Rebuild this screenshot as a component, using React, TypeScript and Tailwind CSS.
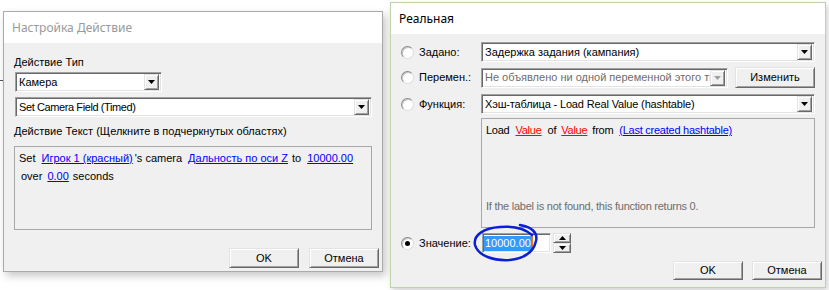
import React from "react";

const sunken =
  "bg-white border border-t-[#a0a0a0] border-l-[#a0a0a0] border-r-white border-b-white shadow-[inset_1px_1px_0_#696969,inset_-1px_-1px_0_#e3e3e3]";
const raised =
  "bg-[#f0f0f0] border border-t-[#e3e3e3] border-l-[#e3e3e3] border-r-[#696969] border-b-[#696969] shadow-[inset_1px_1px_0_#ffffff,inset_-1px_-1px_0_#a0a0a0]";

function Arrow({ color = "#000", up = false }: { color?: string; up?: boolean }) {
  return (
    <svg width="7" height="4" viewBox="0 0 7 4">
      <polygon points={up ? "0,4 7,4 3.5,0" : "0,0 7,0 3.5,4"} fill={color} />
    </svg>
  );
}

function Combo({
  text,
  className,
  textClass = "",
  disabled = false,
}: {
  text: string;
  className: string;
  textClass?: string;
  disabled?: boolean;
}) {
  return (
    <div className={`flex items-center h-[20px] pl-[3px] pr-[2px] ${sunken} ${className}`}>
      <span
        className={`flex-1 overflow-hidden whitespace-nowrap ${
          disabled ? "text-[#6d6d6d]" : "text-black"
        } ${textClass}`}
      >
        {text}
      </span>
      <div className={`flex items-center justify-center w-[15px] h-[16px] shrink-0 ${raised}`}>
        <Arrow color={disabled ? "#a0a0a0" : "#000"} />
      </div>
    </div>
  );
}

function Btn({ label, className }: { label: string; className: string }) {
  return (
    <div className={`flex items-center justify-center text-black ${raised} ${className}`}>
      {label}
    </div>
  );
}

function Radio({ checked = false }: { checked?: boolean }) {
  return (
    <div className="flex items-center justify-center w-[13px] h-[13px] rounded-full bg-white border border-t-[#8a8a8a] border-l-[#8a8a8a] border-r-[#dcdcdc] border-b-[#dcdcdc] shadow-[inset_1px_1px_0_#c8c8c8] shrink-0">
      {checked && <div className="w-[5px] h-[5px] rounded-full bg-black" />}
    </div>
  );
}

function Link({ children, red = false, className = "" }: { children: React.ReactNode; red?: boolean; className?: string }) {
  return (
    <span className={`underline ${red ? "text-[#ff0000]" : "text-[#0000ff]"} ${className}`}>
      {children}
    </span>
  );
}

function ActionDialog() {
  return (
    <div className="flex flex-col w-[380px] h-[261px] mt-[11px] border border-[#aaaaaa] bg-[#f0f0f0] shadow-[3px_4px_8px_rgba(0,0,0,0.22)] shrink-0">
      {/* заголовок */}
      <div className="flex items-center h-[31px] bg-white pl-[8px] font-['Noto_Sans',sans-serif] text-[12px] text-[#9a9a9a]">
        Настройка Действие
      </div>

      <div className="flex flex-col flex-1">
        <div className="h-[14px] leading-[14px] mt-[12px] ml-[10px]">Действие Тип</div>
        <Combo text="Камера" className="w-[147px] mt-[3px] ml-[11px]" />
        <Combo
          text="Set Camera Field (Timed)"
          textClass="tracking-[-0.4px]"
          className="w-[357px] mt-[5px] ml-[11px]"
        />
        <div className="h-[14px] leading-[14px] mt-[7px] ml-[10px]">
          Действие Текст (Щелкните в подчеркнутых областях)
        </div>

        <div className="flex flex-col w-[358px] h-[84px] mt-[8px] ml-[10px] border border-[#a8a8a8] pl-[4px] pt-[2px] leading-[18px]">
          <div className="flex whitespace-nowrap">
            <span>Set</span>
            <Link className="ml-[6px]">Игрок 1 (красный)</Link>
            <span className="ml-[2px]">'s camera</span>
            <Link className="ml-[6px]">Дальность по оси Z</Link>
            <span className="ml-[4px]">to</span>
            <Link className="ml-[6px]">10000.00</Link>
          </div>
          <div className="flex whitespace-nowrap pl-[2px]">
            <span>over</span>
            <Link className="ml-[5px]">0.00</Link>
            <span className="ml-[4px]">seconds</span>
          </div>
        </div>

        <div className="flex justify-end gap-[10px] mt-[18px] pr-[3px]">
          <Btn label="OK" className="w-[70px] h-[20px]" />
          <Btn label="Отмена" className="w-[70px] h-[20px]" />
        </div>
      </div>
    </div>
  );
}

function RealDialog() {
  return (
    <div className="relative flex flex-col w-[436px] h-[286px] mt-[2px] ml-[7px] border border-[#bcd3a5] bg-[#f0f0f0] shadow-[2px_3px_6px_rgba(0,0,0,0.18)] shrink-0">
      <div className="flex items-center h-[31px] bg-white pl-[8px] font-['Noto_Sans',sans-serif] text-[12px] text-black">
        Реальная
      </div>

      <div className="flex flex-col flex-1">
        {/* Задано */}
        <div className="flex items-center h-[20px] mt-[8px]">
          <div className="flex items-center gap-[5px] w-[90px] pl-[10px]">
            <Radio />
            <span>Задано:</span>
          </div>
          <Combo text="Задержка задания (кампания)" className="w-[334px]" />
        </div>

        {/* Перемен. */}
        <div className="flex items-center h-[21px] mt-[5px]">
          <div className="flex items-center gap-[5px] w-[90px] pl-[10px]">
            <Radio />
            <span>Перемен.:</span>
          </div>
          <Combo
            text="Не объявлено ни одной переменной этого типа"
            disabled
            className="w-[247px]"
          />
          <Btn label="Изменить" className="w-[80px] h-[21px] ml-[7px]" />
        </div>

        {/* Функция */}
        <div className="flex items-center h-[20px] mt-[6px]">
          <div className="flex items-center gap-[5px] w-[90px] pl-[10px]">
            <Radio />
            <span>Функция:</span>
          </div>
          <Combo
            text="Хэш-таблица - Load Real Value (hashtable)"
            textClass="tracking-[-0.15px]"
            className="w-[334px]"
          />
        </div>

        <div className="flex flex-col justify-between w-[334px] h-[110px] mt-[4px] ml-[90px] border border-[#a8a8a8] pl-[4px] pt-[4px] pb-[14px] leading-[14px] tracking-[-0.25px]">
          <div className="flex whitespace-nowrap">
            <span>Load</span>
            <Link red className="ml-[6px]">Value</Link>
            <span className="ml-[6px]">of</span>
            <Link red className="ml-[5px]">Value</Link>
            <span className="ml-[5px]">from</span>
            <Link className="ml-[6px]">(Last created hashtable)</Link>
          </div>
          <div className="text-[#6d6d6d] whitespace-nowrap">
            If the label is not found, this function returns 0.
          </div>
        </div>

        {/* Значение */}
        <div className="flex items-center h-[20px] mt-[5px]">
          <div className="flex items-center gap-[5px] w-[91px] pl-[10px]">
            <Radio checked />
            <span>Значение:</span>
          </div>
          <div className={`flex items-center w-[69px] h-[20px] pl-[1px] ${sunken}`}>
            <span className="bg-[#3399ff] text-white leading-[15px] px-[1px]">10000.00</span>
            <span className="w-[1px] h-[14px] bg-[#e07b1a]" />
          </div>
          <div className="flex flex-col w-[18px] h-[20px] ml-[2px]">
            <div className={`flex items-center justify-center flex-1 ${raised}`}>
              <Arrow up />
            </div>
            <div className={`flex items-center justify-center flex-1 ${raised}`}>
              <Arrow />
            </div>
          </div>
        </div>

        <div className="flex justify-end gap-[9px] mt-[8px] pr-[3px]">
          <Btn label="OK" className="w-[70px] h-[19px]" />
          <Btn label="Отмена" className="w-[70px] h-[19px]" />
        </div>
      </div>

      {/* обводка от руки */}
      <svg
        className="absolute left-[79px] top-[219px] pointer-events-none"
        width="72"
        height="42"
        viewBox="0 0 72 42"
      >
        <path
          d="M 50 3 C 62 5, 68 11, 66 19 C 64 29, 56 36, 40 38 C 24 39, 8 34, 5 23 C 3 13, 14 6, 30 5 C 42 4, 54 6, 62 13"
          fill="none"
          stroke="#0b1fd4"
          strokeWidth="2.5"
          strokeLinecap="round"
        />
      </svg>
    </div>
  );
}

export default function App() {
  return (
    <div className="flex w-[829px] h-[290px] bg-white overflow-hidden font-['Liberation_Sans',Arial,sans-serif] text-[11px] text-black">
      <div className="w-[3px] shrink-0 pt-[80px]">
        <div className="h-[1px] w-[3px] bg-[#555555]" />
      </div>
      <ActionDialog />
      <RealDialog />
    </div>
  );
}
